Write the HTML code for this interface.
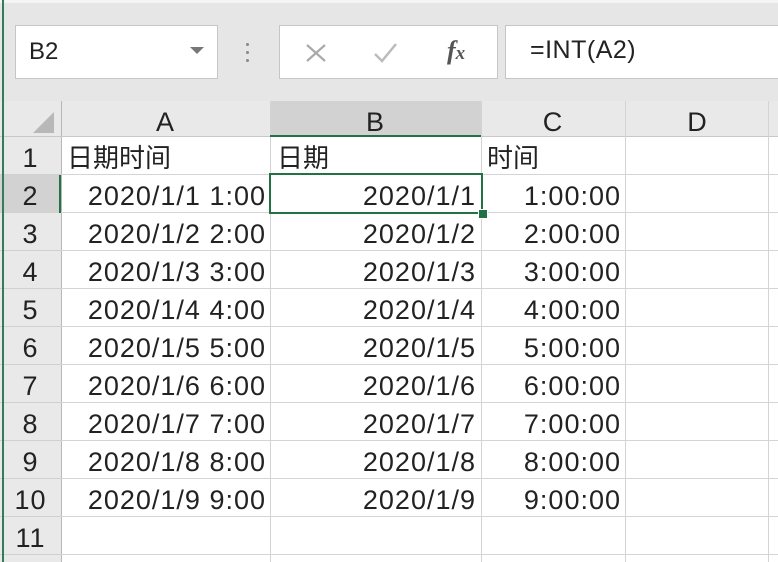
<!DOCTYPE html>
<html><head><meta charset="utf-8"><style>
body{margin:0;width:778px;height:562px;overflow:hidden;background:#fff;font-family:"Liberation Sans","Noto Sans CJK SC",sans-serif;color:#222;position:relative}
.a{position:absolute}
.tb{left:0;top:0;width:778px;height:101px;background:#e6e6e6}
.box{background:#fff;border:1px solid #c6c6c6;box-sizing:border-box}
.c{position:absolute;height:38px;line-height:42px;font-size:27px;letter-spacing:1px;box-sizing:border-box;white-space:nowrap}
.r{text-align:right}
.hl{position:absolute;left:61px;width:717px;height:1px;background:#d4d4d4}
.vl{position:absolute;top:101px;width:1px;height:461px;background:#d4d4d4}
</style></head><body>
<div class="a tb"></div>
<div class="a" style="left:0;top:0;width:778px;height:3px;background:#f4f4f4"></div>
<div class="a box" style="left:15px;top:25px;width:203px;height:54px"></div>
<div class="a" style="left:29px;top:38px;font-size:24px">B2</div>
<div class="a" style="left:190px;top:47px;width:0;height:0;border-left:7px solid transparent;border-right:7px solid transparent;border-top:7px solid #777"></div>
<div class="a" style="left:246px;top:43px;width:3px;height:3px;background:#888;border-radius:2px;box-shadow:0 8px 0 #888,0 16px 0 #888"></div>
<div class="a box" style="left:279px;top:25px;width:219px;height:54px"></div>
<svg class="a" style="left:300px;top:38px" width="120" height="30"><path d="M7 7 L25 23 M25 7 L7 23" stroke="#aaa" stroke-width="2.2"/><path d="M75 16 L82 23 L96 6" stroke="#bbb" stroke-width="2.5" fill="none"/></svg>
<div class="a" style="left:447px;top:36px;font-size:26px;font-style:italic;font-weight:bold;font-family:'Liberation Serif',serif;color:#555">f<span style="font-size:19px">x</span></div>
<div class="a box" style="left:505px;top:25px;width:280px;height:54px"></div>
<div class="a" style="left:530px;top:36px;font-size:25px;letter-spacing:0.5px">=INT(A2)</div>
<!-- headers -->
<div class="a" style="left:0;top:101px;width:61px;height:461px;background:#e9e9e9"></div>
<div class="a" style="left:61px;top:101px;width:717px;height:36px;background:#e9e9e9"></div>
<div class="a" style="left:270px;top:101px;width:211px;height:36px;background:#d2d2d2"></div>
<div class="a" style="left:0;top:175px;width:61px;height:38px;background:#d2d2d2"></div>
<div class="a" style="left:33px;top:112px;width:0;height:0;border-left:21px solid transparent;border-bottom:21px solid #b8b8b8"></div>
<div class="a" style="left:61px;top:101px;width:1px;height:461px;background:#b8b8b8"></div>
<div class="a" style="left:0;top:136px;width:778px;height:1px;background:#c8c8c8"></div>
<div class="c" style="left:61px;top:101px;width:209px;text-align:center;line-height:42px">A</div>
<div class="c" style="left:270px;top:101px;width:211px;text-align:center;line-height:42px">B</div>
<div class="c" style="left:481px;top:101px;width:144px;text-align:center;line-height:42px">C</div>
<div class="c" style="left:625px;top:101px;width:145px;text-align:center;line-height:42px">D</div>
<div class="vl" style="left:270px"></div><div class="vl" style="left:481px"></div><div class="vl" style="left:625px"></div><div class="vl" style="left:768px"></div>
<div class="hl" style="top:174px"></div><div class="hl" style="top:212px"></div><div class="hl" style="top:250px"></div><div class="hl" style="top:288px"></div><div class="hl" style="top:326px"></div><div class="hl" style="top:364px"></div><div class="hl" style="top:402px"></div><div class="hl" style="top:440px"></div><div class="hl" style="top:478px"></div><div class="hl" style="top:516px"></div><div class="hl" style="top:554px"></div>
<div class="a" style="left:0;top:174px;width:61px;height:1px;background:#d0d0d0;box-shadow:0 38px 0 #d0d0d0,0 76px 0 #d0d0d0,0 114px 0 #d0d0d0,0 152px 0 #d0d0d0,0 190px 0 #d0d0d0,0 228px 0 #d0d0d0,0 266px 0 #d0d0d0,0 304px 0 #d0d0d0,0 342px 0 #d0d0d0,0 380px 0 #d0d0d0"></div>
<!-- row numbers -->
<div class="c" style="left:0;top:137px;width:61px;text-align:center">1</div>
<div class="c" style="left:0;top:175px;width:61px;text-align:center">2</div>
<div class="c" style="left:0;top:213px;width:61px;text-align:center">3</div>
<div class="c" style="left:0;top:251px;width:61px;text-align:center">4</div>
<div class="c" style="left:0;top:289px;width:61px;text-align:center">5</div>
<div class="c" style="left:0;top:327px;width:61px;text-align:center">6</div>
<div class="c" style="left:0;top:365px;width:61px;text-align:center">7</div>
<div class="c" style="left:0;top:403px;width:61px;text-align:center">8</div>
<div class="c" style="left:0;top:441px;width:61px;text-align:center">9</div>
<div class="c" style="left:0;top:479px;width:61px;text-align:center">10</div>
<div class="c" style="left:0;top:517px;width:61px;text-align:center">11</div>
<!-- row 1 -->
<div class="c" style="left:67px;top:137px;font-size:26px;letter-spacing:0">日期时间</div>
<div class="c" style="left:277px;top:137px;font-size:26px;letter-spacing:0">日期</div>
<div class="c" style="left:487px;top:137px;font-size:26px;letter-spacing:0">时间</div>
<!-- data -->
<div class="c r" style="left:61px;top:175px;width:205px">2020/1/1 1:00</div>
<div class="c r" style="left:61px;top:213px;width:205px">2020/1/2 2:00</div>
<div class="c r" style="left:61px;top:251px;width:205px">2020/1/3 3:00</div>
<div class="c r" style="left:61px;top:289px;width:205px">2020/1/4 4:00</div>
<div class="c r" style="left:61px;top:327px;width:205px">2020/1/5 5:00</div>
<div class="c r" style="left:61px;top:365px;width:205px">2020/1/6 6:00</div>
<div class="c r" style="left:61px;top:403px;width:205px">2020/1/7 7:00</div>
<div class="c r" style="left:61px;top:441px;width:205px">2020/1/8 8:00</div>
<div class="c r" style="left:61px;top:479px;width:205px">2020/1/9 9:00</div>
<div class="c r" style="left:270px;top:175px;width:206px">2020/1/1</div>
<div class="c r" style="left:270px;top:213px;width:206px">2020/1/2</div>
<div class="c r" style="left:270px;top:251px;width:206px">2020/1/3</div>
<div class="c r" style="left:270px;top:289px;width:206px">2020/1/4</div>
<div class="c r" style="left:270px;top:327px;width:206px">2020/1/5</div>
<div class="c r" style="left:270px;top:365px;width:206px">2020/1/6</div>
<div class="c r" style="left:270px;top:403px;width:206px">2020/1/7</div>
<div class="c r" style="left:270px;top:441px;width:206px">2020/1/8</div>
<div class="c r" style="left:270px;top:479px;width:206px">2020/1/9</div>
<div class="c r" style="left:481px;top:175px;width:140px">1:00:00</div>
<div class="c r" style="left:481px;top:213px;width:140px">2:00:00</div>
<div class="c r" style="left:481px;top:251px;width:140px">3:00:00</div>
<div class="c r" style="left:481px;top:289px;width:140px">4:00:00</div>
<div class="c r" style="left:481px;top:327px;width:140px">5:00:00</div>
<div class="c r" style="left:481px;top:365px;width:140px">6:00:00</div>
<div class="c r" style="left:481px;top:403px;width:140px">7:00:00</div>
<div class="c r" style="left:481px;top:441px;width:140px">8:00:00</div>
<div class="c r" style="left:481px;top:479px;width:140px">9:00:00</div>
<!-- selection -->
<div class="a" style="left:270px;top:135px;width:211px;height:2px;background:#217346"></div>
<div class="a" style="left:59px;top:175px;width:2px;height:38px;background:#217346"></div>
<div class="a" style="left:269px;top:173px;width:214px;height:41px;border:2px solid #217346;box-sizing:border-box"></div>
<div class="a" style="left:478px;top:209px;width:8px;height:8px;background:#217346;border:1px solid #fff"></div>
<div class="a" style="left:2px;top:0;width:2px;height:562px;background:#3b7a57"></div>
</body></html>
